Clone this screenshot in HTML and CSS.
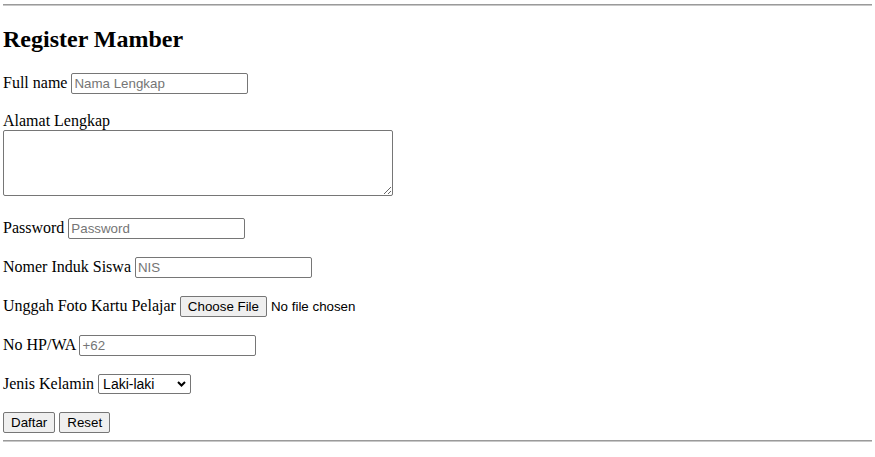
FILE: index.html
```html
<!DOCTYPE html>
<html>
<head>
<meta charset="utf-8">
<title>Register Mamber</title>
<link rel="stylesheet" href="styles.css">
</head>
<body>
<hr class="rule rule-top">
<h2 class="title">Register Mamber</h2>
<form class="form">
  <p class="row"><label>Full name</label> <input class="field" type="text" placeholder="Nama Lengkap"></p>
  <p class="row row-area"><label>Alamat Lengkap</label><br><textarea class="area"></textarea></p>
  <p class="row"><label>Password</label> <input class="field" type="password" placeholder="Password"></p>
  <p class="row"><label>Nomer Induk Siswa</label> <input class="field" type="text" placeholder="NIS"></p>
  <p class="row"><label>Unggah Foto Kartu Pelajar</label> <input class="file" type="file"></p>
  <p class="row"><label>No HP/WA</label> <input class="field" type="text" placeholder="+62"></p>
  <p class="row"><label>Jenis Kelamin</label> <select class="select"><option>Laki-laki</option><option>Perempuan</option></select></p>
  <p class="row row-last"><button class="btn" type="submit">Daftar</button> <button class="btn" type="reset">Reset</button></p>
</form>
<hr class="rule rule-bottom">
</body>
</html>
```
FILE: styles.css
```css
html, body {
  margin: 0;
  padding: 0;
  background: #fff;
}
body {
  padding: 0 3px;
  font-family: "Liberation Serif", "Times New Roman", serif;
  font-size: 16px;
  color: #000;
}
.rule {
  border: 0;
  border-top: 1px solid #9a9a9a;
  border-bottom: 1px solid #c8c8c8;
  height: 0;
}
.rule-top {
  padding: 0;
  margin: 4px 0 0;
}
.title {
  font-size: 24px;
  font-weight: bold;
  margin: 20px 0 20px;
  line-height: 27px;
}
.form {
  margin: 0;
}
.row {
  margin: 16px 0;
}
.row-area {
  margin-bottom: 18px;
}
.row-last {
  margin-bottom: 0;
}
.field, .area, .select, .btn, .file {
  font-family: "Liberation Sans", Arial, sans-serif;
  font-size: 13.333px;
}
.field {
  box-sizing: border-box;
  width: 177px;
  height: 21px;
  margin: 0 0 2px;
  border: 1px solid #767676;
  border-radius: 2px;
  padding: 1px 2px;
}
.field::placeholder {
  color: #757575;
}
.area {
  box-sizing: border-box;
  width: 390px;
  height: 66px;
  border: 1px solid #767676;
  border-radius: 2px;
  font-family: "Liberation Mono", monospace;
}
.file {
  margin: 0 0 2px;
}
.file::file-selector-button {
  box-sizing: border-box;
  height: 21px;
  padding: 1px 7px;
  margin-right: 4px;
  background: #efefef;
  border: 1px solid #767676;
  border-radius: 2px;
  color: #000;
  font-family: "Liberation Sans", Arial, sans-serif;
  font-size: 13.333px;
}
.select {
  -webkit-appearance: none;
  appearance: none;
  box-sizing: border-box;
  width: 93px;
  height: 20px;
  margin: 0 0 2px;
  padding: 0 16px 0 4px;
  border: 1px solid #767676;
  border-radius: 2px;
  background-color: #fff;
  background-image: url("data:image/svg+xml,%3Csvg xmlns='http://www.w3.org/2000/svg' width='9' height='6' viewBox='0 0 9 6'%3E%3Cpath d='M1 1l3.5 3.5L8 1' fill='none' stroke='%23000' stroke-width='2'/%3E%3C/svg%3E");
  background-repeat: no-repeat;
  background-position: right 4px center;
  color: #000;
  font-size: 14px;
}
.btn {
  box-sizing: border-box;
  height: 21px;
  padding: 1px 7px;
  margin: 0;
  background: #efefef;
  border: 1px solid #767676;
  border-radius: 2px;
  color: #000;
}
.rule-bottom {
  margin: 7px 0 0;
}
```
